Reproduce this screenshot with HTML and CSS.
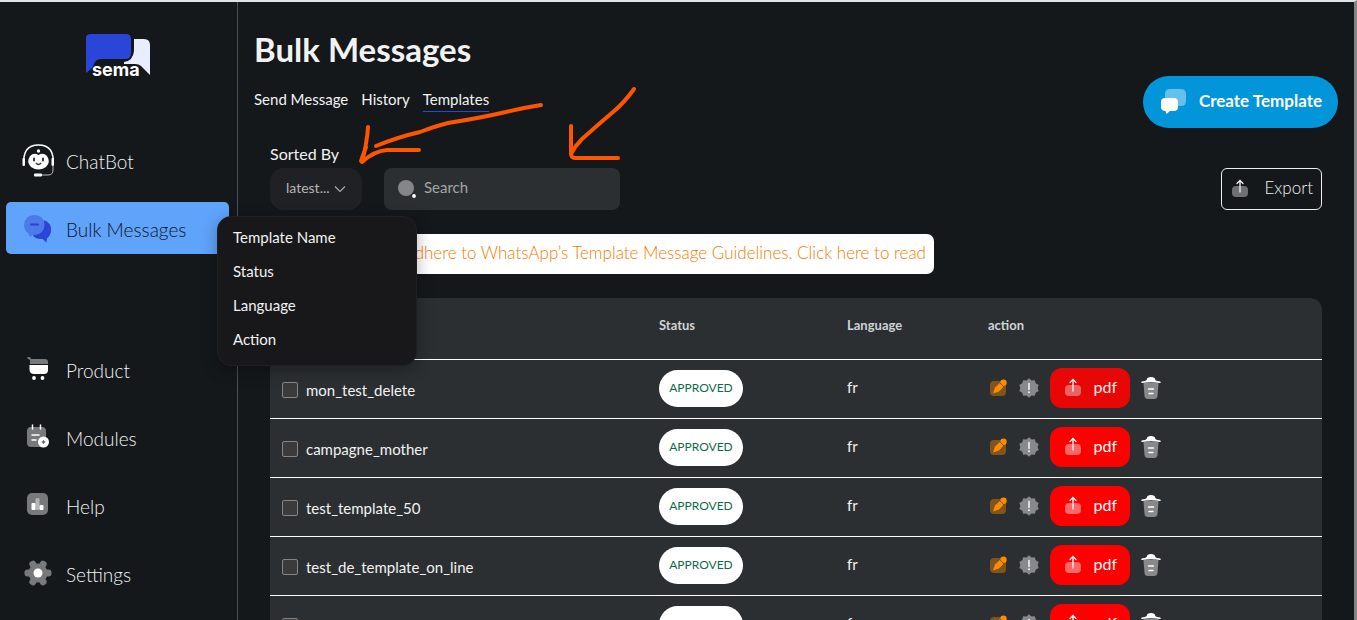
FILE: index.html
```html
<!DOCTYPE html>
<html lang="en">
<head>
<meta charset="utf-8">
<title>Bulk Messages</title>
<link rel="stylesheet" href="styles.css">
</head>
<body>
<svg class="sprite" aria-hidden="true">
  <symbol id="export" viewBox="0 0 20 20"><rect x="2" y="7" width="16" height="11" rx="4" fill="currentColor" opacity=".4"/><path d="M10 13V2M7 4.500L10 1.500L13 4.500" fill="none" stroke="currentColor" stroke-width="1.300" stroke-linecap="round"/></symbol>
  <symbol id="edit" viewBox="0 0 20 20"><rect x="2" y="3" width="16" height="15" rx="4" fill="#ff8c00" opacity=".4"/><path d="M5 15.500L7 9.500L11.800 5L15.500 8.700L11 13.500Z" fill="#ff8c00"/><circle cx="15.500" cy="4.800" r="3.200" fill="#ff8c00"/><path d="M11.600 4.500L16 8.900" stroke="#6b4a1e" stroke-width=".8"/></symbol>
  <symbol id="alert" viewBox="0 0 20 20"><path d="M10 .3L12.500 2.500L15.800 2.200L16.700 5.300L19.700 7L18.600 10L19.700 13L16.700 14.700L15.800 17.800L12.500 17.500L10 19.700L7.500 17.500L4.200 17.800L3.300 14.700L.3 13L1.400 10L.3 7L3.300 5.300L4.200 2.200L7.500 2.500Z" fill="#87898a"/><path d="M10 5.500V11.500" stroke="#fff" stroke-width="1.400" stroke-linecap="round"/><circle cx="10" cy="14.200" r=".9" fill="#fff"/></symbol>
  <symbol id="trash" viewBox="0 0 20 24"><path d="M2.500 7H17.500L16.500 20Q16.200 23 13 23H7Q3.800 23 3.500 20Z" fill="#87898a"/><path d="M.8 6Q5.500 5 5.800 3.600Q6 1 10 1Q14 1 14.200 3.600Q14.500 5 19.200 6" fill="#fff"/><path d="M1 6.300Q10 4.800 19 6.300" fill="none" stroke="#fff" stroke-width="1.400" stroke-linecap="round"/><path d="M7.500 13H12.500M8 17.500H12" stroke="#fff" stroke-width="1.400" stroke-linecap="round"/></symbol>
</svg>
<div class="app">
  <aside class="sidebar">
    <svg class="logo" viewBox="0 0 66 48" role="img" aria-label="sema">
      <path d="M1 41V6Q1 2 6 2H41Q46 2 46 7V21Q46 27 40 27H16Q12 27 10 30L7 36Z" fill="#2b45d8"/>
      <path d="M49 7H59Q65 7 65 13V43L56 34Q54 32 50 32H39V30Q48 29 49 19Z" fill="#e8edff"/>
      <text x="7" y="44" class="logo-text">sema</text>
    </svg>
    <nav class="nav">
      <a class="nav-item" href="#">
        <svg width="36" height="36" viewBox="0 0 36 36"><path d="M4 22Q2 2 18.500 2Q35 2 33 22" fill="none" stroke="#fff" stroke-width="1.500"/><rect x="2.500" y="15" width="2.500" height="8" rx="1" fill="#fff"/><rect x="31.500" y="15" width="2.500" height="8" rx="1" fill="#fff"/><path d="M18.500 12Q23 9 27 13Q31 19 26 24Q18.500 29 11 24Q6 19 10 13Q14 9 18.500 12Z" fill="#fff"/><circle cx="18.500" cy="8" r="1.700" fill="#fff"/><rect x="13" y="14.500" width="2" height="4" rx="1" fill="#34383b"/><rect x="22" y="14.500" width="2" height="4" rx="1" fill="#34383b"/><path d="M16 20Q18.500 23 21 20" fill="none" stroke="#34383b" stroke-width="1.500"/><path d="M33 22V27Q33 32 28 32H20" fill="none" stroke="#bbb" stroke-width="1"/><rect x="14" y="30.500" width="8" height="3" rx="1" fill="#fff"/></svg>
        <span>ChatBot</span></a>
      <a class="nav-item active" href="#">
        <svg width="36" height="36" viewBox="0 0 36 36"><path d="M24 9Q32 12 31 21Q30 25 27 27.500L26.500 31.500L22.500 28Q12 28 13 22Q24 20 24 9Z" fill="#2b45d8"/><path d="M14.500 4Q24 4 24.500 14Q24 23 15 24L12.500 24L10 26L8 22Q4 19 4 14Q5 4 14.500 4Z" fill="#4d79ea"/><path d="M11 13.500H18" stroke="#2b45d8" stroke-width="2" stroke-linecap="round"/></svg>
        <span>Bulk Messages</span></a>
      <a class="nav-item after-gap" href="#">
        <svg width="36" height="36" viewBox="0 0 36 36"><path d="M7.500 5H9.500Q10.500 5 11 7H25Q28 7 28 10V12H10V8L7.500 6.500Z" fill="#77797a"/><path d="M9.500 13H28V18Q28 22 24 22H14Q10 22 9.500 18Z" fill="#fff"/><circle cx="14" cy="26" r="1.900" fill="#fff"/><circle cx="22.500" cy="26" r="1.900" fill="#fff"/></svg>
        <span>Product</span></a>
      <a class="nav-item" href="#">
        <svg width="36" height="36" viewBox="0 0 36 36"><rect x="7" y="7" width="19" height="20" rx="4" fill="#77797a"/><path d="M12.500 5V9M20.500 5V9M12 15H19M12 20H16" stroke="#fff" stroke-width="1.500" stroke-linecap="round"/><circle cx="23.500" cy="22" r="5.500" fill="#fff"/><path d="M21.800 22H25.200M23.500 20.300V23.700" stroke="#666" stroke-width="1.300"/></svg>
        <span>Modules</span></a>
      <a class="nav-item" href="#">
        <svg width="36" height="36" viewBox="0 0 36 36"><rect x="7" y="5" width="21" height="22" rx="5" fill="#77797a"/><rect x="15.500" y="10" width="4" height="12" rx="1.500" fill="#b5b6b7"/><rect x="11.500" y="15" width="4" height="7" rx="1" fill="#fff"/><rect x="19.500" y="17" width="4" height="5" rx="1" fill="#fff"/></svg>
        <span>Help</span></a>
      <a class="nav-item" href="#">
        <svg width="36" height="36" viewBox="0 0 36 36"><g fill="#77797a"><circle cx="18" cy="17" r="9.500"/><rect x="4.500" y="13.500" width="27" height="7" rx="3"/><rect x="4.500" y="13.500" width="27" height="7" rx="3" transform="rotate(60 18 17)"/><rect x="4.500" y="13.500" width="27" height="7" rx="3" transform="rotate(120 18 17)"/></g><circle cx="18" cy="17" r="4.500" fill="#fff"/></svg>
        <span>Settings</span></a>
    </nav>
  </aside>

  <main class="main">
    <header class="top">
      <div>
        <h1>Bulk Messages</h1>
        <nav class="tabs"><a href="#">Send Message</a><a href="#">History</a><a class="current" href="#">Templates</a></nav>
      </div>
      <button class="create" type="button">
        <svg width="28" height="28" viewBox="0 0 28 28"><path d="M10 1H21Q26 1 26 6V13Q26 18 21 18L10 18Q5 18 5 13V6Q5 1 10 1Z" fill="#66c0ea"/><path d="M5 10H14Q18 10 18 14V19Q18 23 14 23H10L6.500 26L5.500 23Q1 23 1 19V14Q1 10 5 10Z" fill="#fff"/></svg>
        <span>Create Template</span>
      </button>
    </header>

    <section class="content">
      <label class="sort-label" for="sort">Sorted By</label>
      <div class="toolbar">
        <button class="sort" id="sort" type="button" aria-expanded="true"><span>latest...</span>
          <svg width="12" height="8" viewBox="0 0 12 8"><path d="M1 1.500L6 6.500L11 1.500" fill="none" stroke="#aaa" stroke-width="1.200"/></svg>
        </button>
        <div class="search">
          <svg width="20" height="20" viewBox="0 0 20 20"><circle cx="9" cy="9" r="8" fill="#848687"/><circle cx="17" cy="17" r="1.900" fill="#fff"/></svg>
          <input type="search" placeholder="Search" aria-label="Search">
        </div>
        <button class="export" type="button"><svg width="20" height="20"><use href="#export"/></svg><span>Export</span></button>
      </div>

      <a class="notice" href="#">Please strictly adhere to WhatsApp’s Template Message Guidelines. Click here to read</a>

      <table class="templates">
        <colgroup><col class="c-name"><col class="c-status"><col class="c-lang"><col></colgroup>
        <thead><tr><th aria-label="Template Name"></th><th>Status</th><th>Language</th><th>action</th></tr></thead>
        <tbody>
          <tr><td><label class="name"><input type="checkbox">mon_test_delete</label></td><td><span class="badge">APPROVED</span></td><td><span class="lang">fr</span></td><td><div class="actions"><button type="button" aria-label="Edit"><svg width="20" height="20"><use href="#edit"/></svg></button><button type="button" aria-label="Details"><svg width="20" height="20"><use href="#alert"/></svg></button><button class="pdf hover" type="button"><svg width="20" height="20"><use href="#export"/></svg><span>pdf</span></button><button type="button" aria-label="Delete"><svg width="20" height="24"><use href="#trash"/></svg></button></div></td></tr>
          <tr><td><label class="name"><input type="checkbox">campagne_mother</label></td><td><span class="badge">APPROVED</span></td><td><span class="lang">fr</span></td><td><div class="actions"><button type="button" aria-label="Edit"><svg width="20" height="20"><use href="#edit"/></svg></button><button type="button" aria-label="Details"><svg width="20" height="20"><use href="#alert"/></svg></button><button class="pdf" type="button"><svg width="20" height="20"><use href="#export"/></svg><span>pdf</span></button><button type="button" aria-label="Delete"><svg width="20" height="24"><use href="#trash"/></svg></button></div></td></tr>
          <tr><td><label class="name"><input type="checkbox">test_template_50</label></td><td><span class="badge">APPROVED</span></td><td><span class="lang">fr</span></td><td><div class="actions"><button type="button" aria-label="Edit"><svg width="20" height="20"><use href="#edit"/></svg></button><button type="button" aria-label="Details"><svg width="20" height="20"><use href="#alert"/></svg></button><button class="pdf" type="button"><svg width="20" height="20"><use href="#export"/></svg><span>pdf</span></button><button type="button" aria-label="Delete"><svg width="20" height="24"><use href="#trash"/></svg></button></div></td></tr>
          <tr><td><label class="name"><input type="checkbox">test_de_template_on_line</label></td><td><span class="badge">APPROVED</span></td><td><span class="lang">fr</span></td><td><div class="actions"><button type="button" aria-label="Edit"><svg width="20" height="20"><use href="#edit"/></svg></button><button type="button" aria-label="Details"><svg width="20" height="20"><use href="#alert"/></svg></button><button class="pdf" type="button"><svg width="20" height="20"><use href="#export"/></svg><span>pdf</span></button><button type="button" aria-label="Delete"><svg width="20" height="24"><use href="#trash"/></svg></button></div></td></tr>
          <tr><td><label class="name"><input type="checkbox" aria-label="Select template"></label></td><td><span class="badge">APPROVED</span></td><td><span class="lang">fr</span></td><td><div class="actions"><button type="button" aria-label="Edit"><svg width="20" height="20"><use href="#edit"/></svg></button><button type="button" aria-label="Details"><svg width="20" height="20"><use href="#alert"/></svg></button><button class="pdf" type="button"><svg width="20" height="20"><use href="#export"/></svg><span>pdf</span></button><button type="button" aria-label="Delete"><svg width="20" height="24"><use href="#trash"/></svg></button></div></td></tr>
        </tbody>
      </table>
    </section>
  </main>

  <div class="menu" role="menu">
    <button type="button" role="menuitem">Template Name</button>
    <button type="button" role="menuitem">Status</button>
    <button type="button" role="menuitem">Language</button>
    <button type="button" role="menuitem">Action</button>
  </div>

  <svg class="marks" width="660" height="200" viewBox="0 0 660 200" aria-hidden="true">
    <path d="M376 146Q398 137 420 132Q436 126 448 123Q480 118 506 112Q522 108 541 105"/>
    <path d="M368 127Q367 143 362 162Q374 151 387 150L419 150M366 147L361 161"/>
    <path d="M634 89Q624 103 613 112L599 124L582 139Q575 146 571 154M571 126V153Q571 158 575 158H618"/>
  </svg>
</div>
</body>
</html>
```

FILE: styles.css
```css
* { box-sizing: border-box; }

body {
  margin: 0;
  height: 100vh;
  overflow: hidden;
  background: #14181b;
  color: #f2f2f2;
  font-family: Lato, "Open Sans", sans-serif;
  font-size: 15px;
}

a { color: inherit; text-decoration: none; }
button { border: 0; padding: 0; background: none; color: inherit; font: inherit; cursor: pointer; }
svg { flex: none; display: block; }
.sprite { position: absolute; width: 0; height: 0; }

.app {
  position: relative;
  display: flex;
  height: 100vh;
  overflow: hidden;
  border-top: 2px solid #dfe3e6;
  border-right: 3px solid #858585;
}

.sidebar { flex: none; width: 238px; border-right: 1px solid #4a4f55; }
.logo { width: 66px; height: 48px; margin: 30px 0 0 85px; overflow: visible; }
.logo-text { font: 700 18px Inter, sans-serif; fill: #fff; }

.nav { display: flex; flex-direction: column; gap: 16px; padding: 54px 8px 0 6px; }
.nav-item {
  display: flex;
  align-items: center;
  gap: 10px;
  height: 52px;
  padding: 2px 14px 0;
  border-radius: 5px;
  font-size: 19px;
  font-weight: 300;
}
.nav-item.active { background: #60a3fa; color: #10151d; }
.nav-item.after-gap { margin-top: 73px; }

.main { flex: 1; min-width: 0; }
.top { display: flex; justify-content: space-between; padding: 27px 16px 0; }
h1 { margin: 0; font-size: 33px; line-height: 40px; }
.tabs { display: flex; gap: 13px; margin-top: 18px; line-height: 24px; }
.tabs .current { border-bottom: 1px solid #2b45d8; }
.create {
  display: flex;
  align-items: center;
  gap: 11px;
  height: 52px;
  margin-top: 47px;
  padding: 0 16px 0 17px;
  border-radius: 26px;
  background: #0395da;
  color: #fff;
  font-size: 17px;
  font-weight: 700;
}
.create span, .pdf span, .sort span { padding-bottom: 4px; }

.content { padding: 14px 32px 0; }
.sort-label { display: block; font-size: 16px; line-height: 24px; }
.toolbar { display: flex; align-items: flex-start; margin-top: 2px; }
.sort {
  display: flex;
  align-items: center;
  justify-content: space-between;
  width: 92px;
  height: 42px;
  padding: 0 16px;
  border-radius: 14px;
  background: #202124;
  color: #b5b5b5;
  font-size: 14px;
}
.search {
  display: flex;
  align-items: center;
  gap: 7px;
  width: 236px;
  height: 42px;
  margin-left: 22px;
  padding: 0 13px;
  border-radius: 8px;
  background: #2b2f32;
}
.search input { min-width: 0; flex: 1; border: 0; padding: 0 0 4px; outline: 0; background: none; color: #fff; font: inherit; }
.search input::placeholder { color: #a3a5a8; }
.export {
  display: flex;
  align-items: center;
  justify-content: space-between;
  width: 101px;
  height: 42px;
  margin-left: auto;
  padding: 0 8px;
  border: 1px solid #eee;
  border-radius: 6px;
  font-size: 17px;
  font-weight: 300;
}
.export span { padding-bottom: 4px; }

.notice {
  display: block;
  width: 664px;
  height: 40px;
  margin-top: 24px;
  padding: 0 8px;
  overflow: hidden;
  border-radius: 7px;
  background: #fff;
  color: #f07d00;
  font-size: 17px;
  font-weight: 300;
  line-height: 37px;
  text-align: right;
  white-space: nowrap;
}

.templates {
  width: 100%;
  margin-top: 24px;
  border-spacing: 0;
  table-layout: fixed;
  border-radius: 12px 12px 0 0;
  background: #2b2f32;
}
.c-name { width: 389px; }
.c-status { width: 188px; }
.c-lang { width: 141px; }
th { height: 62px; padding: 0 0 8px; border-bottom: 1px solid #fff; color: #d0d3d6; font-size: 13px; text-align: left; }
td { height: 59px; padding: 0 0 2px; border-bottom: 1px solid #fff; }
.name { display: flex; align-items: center; gap: 8px; padding: 4px 0 0 12px; }
.name input {
  appearance: none;
  width: 16px;
  height: 16px;
  margin: 0;
  border: 1px solid #858585;
  border-radius: 2px;
  background: #3b3b3b;
}
.badge {
  display: inline-block;
  width: 84px;
  height: 37px;
  border-radius: 19px;
  background: #fff;
  color: #0e6b47;
  font-size: 12px;
  line-height: 36px;
  text-align: center;
  vertical-align: middle;
}
.lang { display: block; padding-bottom: 3px; }
.actions { display: flex; align-items: center; gap: 11px; height: 56px; }
.pdf {
  display: flex;
  align-items: center;
  justify-content: space-between;
  width: 80px;
  height: 40px;
  padding: 0 13px;
  border-radius: 12px;
  background: #f00;
  color: #fff;
  font-size: 16px;
}
.pdf.hover { background: #e80707; color: #eee; }

/* Drop-down that floats over the page */
.menu {
  position: absolute;
  top: 214px;
  left: 217px;
  display: flex;
  flex-direction: column;
  width: 200px;
  padding: 3px 0 9px;
  border: 1px solid #202022;
  border-radius: 14px;
  background: #18181a;
  box-shadow: 0 4px 16px rgba(0, 0, 0, .3);
}
.menu button { height: 34px; padding: 0 15px; text-align: left; }

/* Hand-drawn arrows over the page */
.marks { position: absolute; top: -2px; left: 0; pointer-events: none; }
.marks path { fill: none; stroke: #ff5500; stroke-width: 4; stroke-linecap: round; stroke-linejoin: round; }
```
